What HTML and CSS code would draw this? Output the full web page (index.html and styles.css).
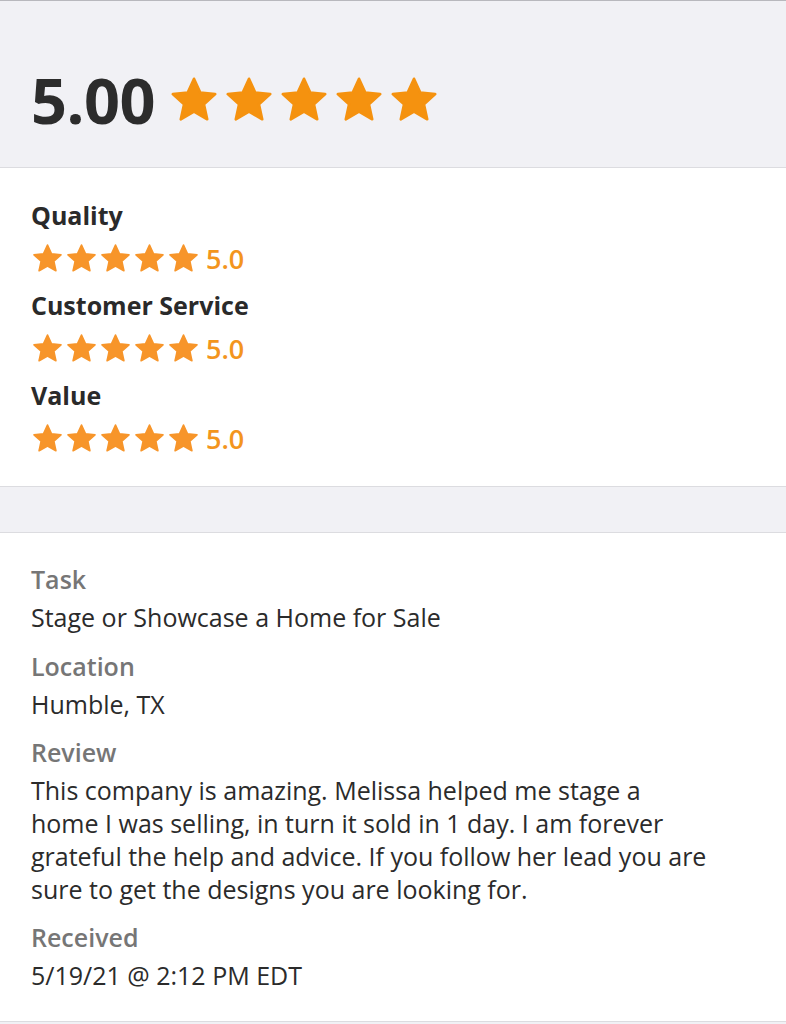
FILE: index.html
```html
<!DOCTYPE html>
<html>
<head>
<meta charset="utf-8">
<link rel="stylesheet" href="styles.css">
</head>
<body>
<svg width="0" height="0" class="defs">
  <defs>
    <path id="star" d="M12 2.2 L14.9 8.6 L21.8 9.3 L16.6 14 L18.1 20.9 L12 17.4 L5.9 20.9 L7.4 14 L2.2 9.3 L9.1 8.6 Z"/>
  </defs>
</svg>
<div class="page">
  <header class="summary">
    <div class="overall">
      <span class="score">5.00</span>
      <span class="stars big">
        <svg viewBox="0 0 24 24"><use href="#star"/></svg>
        <svg viewBox="0 0 24 24"><use href="#star"/></svg>
        <svg viewBox="0 0 24 24"><use href="#star"/></svg>
        <svg viewBox="0 0 24 24"><use href="#star"/></svg>
        <svg viewBox="0 0 24 24"><use href="#star"/></svg>
      </span>
    </div>
  </header>

  <section class="ratings">
    <div class="rating">
      <div class="rating-label">Quality</div>
      <div class="rating-row">
        <span class="stars small">
          <svg viewBox="0 0 24 24"><use href="#star"/></svg>
          <svg viewBox="0 0 24 24"><use href="#star"/></svg>
          <svg viewBox="0 0 24 24"><use href="#star"/></svg>
          <svg viewBox="0 0 24 24"><use href="#star"/></svg>
          <svg viewBox="0 0 24 24"><use href="#star"/></svg>
        </span>
        <span class="rating-value">5.0</span>
      </div>
    </div>
    <div class="rating">
      <div class="rating-label">Customer Service</div>
      <div class="rating-row">
        <span class="stars small">
          <svg viewBox="0 0 24 24"><use href="#star"/></svg>
          <svg viewBox="0 0 24 24"><use href="#star"/></svg>
          <svg viewBox="0 0 24 24"><use href="#star"/></svg>
          <svg viewBox="0 0 24 24"><use href="#star"/></svg>
          <svg viewBox="0 0 24 24"><use href="#star"/></svg>
        </span>
        <span class="rating-value">5.0</span>
      </div>
    </div>
    <div class="rating">
      <div class="rating-label">Value</div>
      <div class="rating-row">
        <span class="stars small">
          <svg viewBox="0 0 24 24"><use href="#star"/></svg>
          <svg viewBox="0 0 24 24"><use href="#star"/></svg>
          <svg viewBox="0 0 24 24"><use href="#star"/></svg>
          <svg viewBox="0 0 24 24"><use href="#star"/></svg>
          <svg viewBox="0 0 24 24"><use href="#star"/></svg>
        </span>
        <span class="rating-value">5.0</span>
      </div>
    </div>
  </section>

  <div class="spacer"></div>

  <section class="details">
    <div class="field">
      <div class="field-label">Task</div>
      <div class="field-value">Stage or Showcase a Home for Sale</div>
    </div>
    <div class="field">
      <div class="field-label">Location</div>
      <div class="field-value">Humble, TX</div>
    </div>
    <div class="field">
      <div class="field-label">Review</div>
      <div class="field-value">This company is amazing. Melissa helped me stage a<br>home I was selling, in turn it sold in 1 day. I am forever<br>grateful the help and advice. If you follow her lead you are<br>sure to get the designs you are looking for.</div>
    </div>
    <div class="field">
      <div class="field-label">Received</div>
      <div class="field-value">5/19/21 @ 2:12 PM EDT</div>
    </div>
  </section>
  <div class="footer-band"></div>
</div>
</body>
</html>
```

FILE: styles.css
```css
* { box-sizing: border-box; }
html, body {
  margin: 0;
  padding: 0;
  background: #ffffff;
}
body {
  font-family: "Open Sans", "Noto Sans", sans-serif;
  color: #2f2f2f;
}
.defs { position: absolute; width: 0; height: 0; }
.page {
  display: flex;
  flex-direction: column;
  width: 786px;
}
.summary {
  background: #f1f1f5;
  border-top: 1px solid #b8b8bd;
  border-bottom: 1px solid #dcdce0;
  height: 168px;
  padding: 70px 0 0 31px;
}
.overall {
  display: flex;
  align-items: center;
  height: 58px;
  gap: 13px;
}
.score {
  font-size: 63px;
  font-weight: 700;
  line-height: 58px;
  color: #2c2c2c;
  letter-spacing: -0.5px;
}
.stars {
  display: flex;
  align-items: center;
}
.stars svg { display: block; fill: #f5920f; stroke: #f5920f; stroke-linejoin: round; stroke-width: 1.2; }
.stars.big { gap: 3px; }
.stars.big svg { width: 52px; height: 52px; }
.stars.small { gap: 1px; }
.stars.small svg { width: 33px; height: 33px; fill: #f7952a; stroke: #f7952a; }

.ratings {
  padding: 25px 31px 23px;
  display: flex;
  flex-direction: column;
}
.rating-label {
  height: 44px;
  line-height: 44px;
  font-size: 25px;
  font-weight: 700;
  color: #2a2a2a;
}
.rating-row {
  height: 46px;
  display: flex;
  align-items: center;
  gap: 6px;
  padding-bottom: 3px;
}
.rating-value {
  font-size: 27px;
  font-weight: 600;
  color: #f3951e;
}
.spacer {
  height: 47px;
  background: #f1f1f5;
  border-top: 1px solid #dcdce0;
  border-bottom: 1px solid #dcdce0;
}
.details {
  padding: 25px 31px 29px;
  display: flex;
  flex-direction: column;
  gap: 11px;
}
.field-label {
  height: 43px;
  line-height: 43px;
  font-size: 25px;
  font-weight: 600;
  color: #767676;
}
.field-value {
  font-size: 25px;
  line-height: 32.7px;
  color: #2b2b2b;
}
.footer-band {
  height: 4px;
  background: #f1f1f5;
  border-top: 1px solid #dcdce0;
}
```
